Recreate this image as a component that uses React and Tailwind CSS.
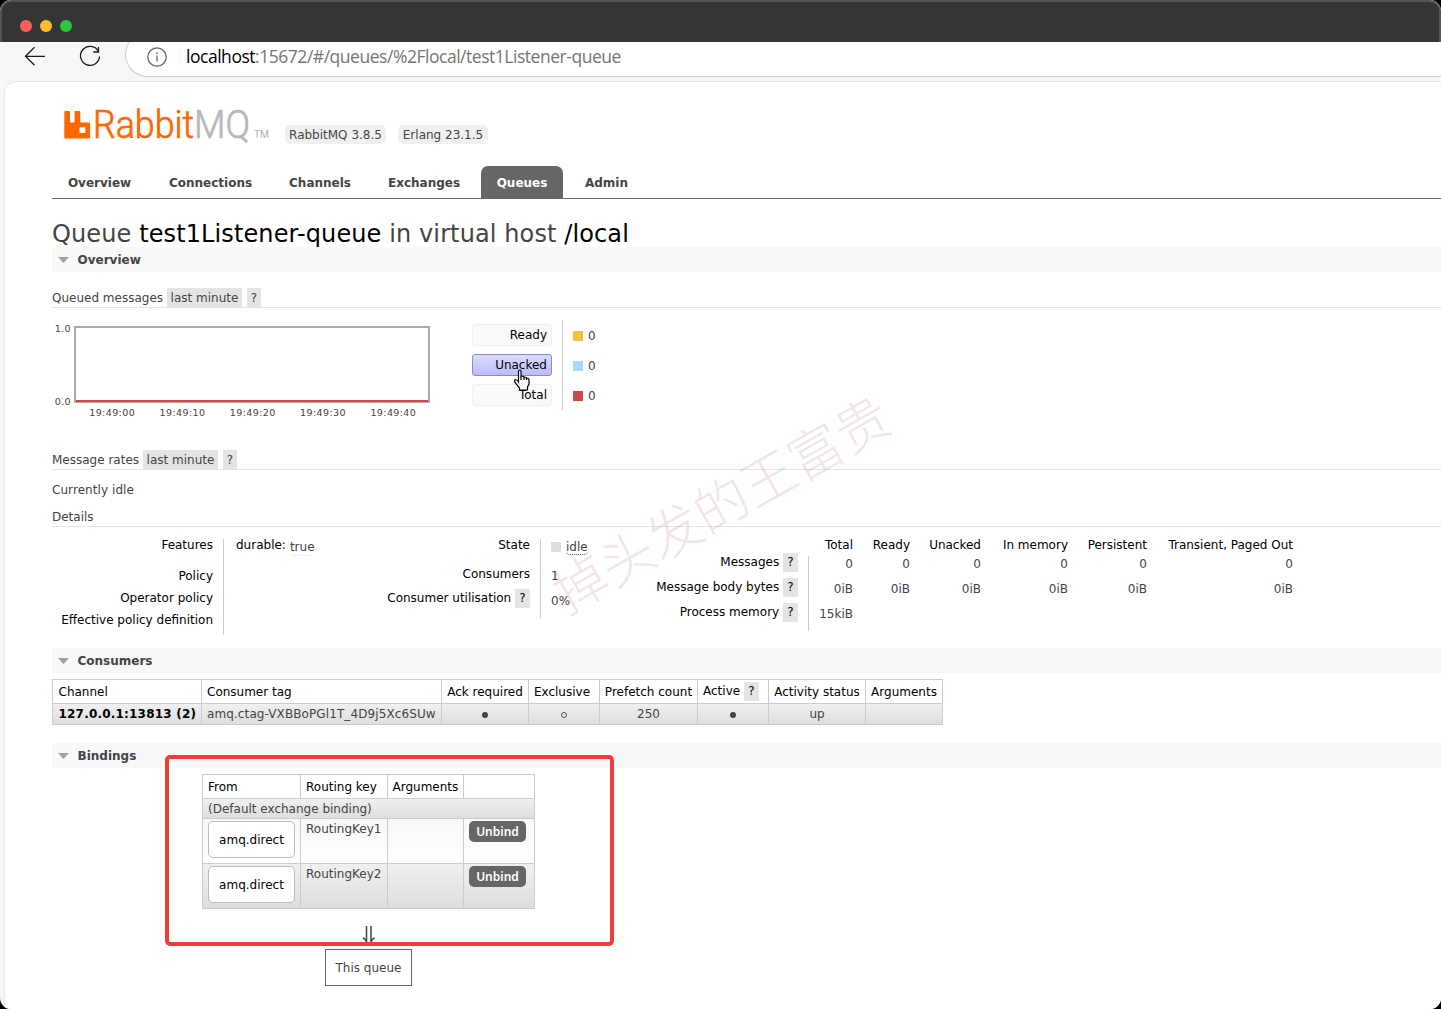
import React from 'react';

const tabs = [
  { name: 'Overview', cls: 'w-[96px] pr-px' },
  { name: 'Connections', cls: 'w-[115px]' },
  { name: 'Channels', cls: 'w-[94px]' },
  { name: 'Exchanges', cls: 'w-[104px]' },
  { name: 'Queues', cls: 'w-[82px]', active: true },
  { name: 'Admin', cls: 'w-[77px]' },
];

const legend = [
  { name: 'Ready', color: 'bg-[#edc240]', value: 0 },
  { name: 'Unacked', color: 'bg-[#afd8f8]', value: 0, hover: true },
  { name: 'Total', color: 'bg-[#cb4b4b]', value: 0 },
];

const times = ['19:49:00', '19:49:10', '19:49:20', '19:49:30', '19:49:40'];

const stats = [
  { name: 'Total', cls: 'w-[44px]', values: ['0', '0iB', '15kiB'] },
  { name: 'Ready', cls: 'w-[57px]', values: ['0', '0iB'] },
  { name: 'Unacked', cls: 'w-[71px]', values: ['0', '0iB'] },
  { name: 'In memory', cls: 'w-[87px]', values: ['0', '0iB'] },
  { name: 'Persistent', cls: 'w-[79px]', values: ['0', '0iB'] },
  { name: 'Transient, Paged Out', cls: 'w-[146px]', values: ['0', '0iB'] },
];

const bindings = [
  { from: 'amq.direct', key: 'RoutingKey1', row: 'bg-linear-to-b from-[#f8f8f8] to-white' },
  { from: 'amq.direct', key: 'RoutingKey2', row: 'bg-linear-to-b from-[#f0f0f0] to-[#dddddd]' },
];

function Help() {
  return <span className="inline-block h-[19px] w-[15px] bg-[#e4e4e4] text-center leading-[19px]">?</span>;
}

function Section({ title }) {
  return (
    <h2 className="flex h-[25px] items-center bg-[#f8f8f8] pl-[6px] font-bold">
      <svg width="11" height="6" viewBox="0 0 11 6" className="mr-[8.500px]">
        <path d="M0 0h11L5.5 6z" fill="#a0a0a0" />
      </svg>
      {title}
    </h2>
  );
}

function RateHeading({ title, width }) {
  return (
    <h3 className="flex h-5 border-b border-[#e4e4e4] leading-[20px]">
      <span className={width}>{title}</span>
      <span className="mr-[5px] w-[75px] bg-[#e4e4e4] text-center">last minute</span>
      <span className="w-[14px] bg-[#e4e4e4] text-center">?</span>
    </h3>
  );
}

function Toolbar() {
  return (
    <div className="flex h-[40px] overflow-hidden bg-[#f7f7f7]">
      <svg width="125" height="40" fill="none" stroke="#1b1b1b" strokeWidth="1.3">
        <path d="M45 14.300H25.500M34.500 5.300l-9 9 9 9" />
        <path d="M98.300 9.200A9.500 9.500 0 1 0 99.500 14.500M98.500 5v5h-5.200" />
      </svg>
      <div className="-mt-[10px] flex h-[45px] flex-1 items-center rounded-l-full border-b border-l border-[#cccccc] bg-white pt-[6px] pl-[21px]">
        <svg width="20" height="20" viewBox="0 0 20 20" fill="none" stroke="#666" strokeWidth="1.3">
          <circle cx="10" cy="10" r="9.200" />
          <path d="M10 8.500v6M10 5.300v1.600" />
        </svg>
        <span className="ml-[19px] font-['Open_Sans',sans-serif] text-[17.500px] tracking-[-0.47px] whitespace-nowrap text-[#757575]">
          <span className="text-black">localhost</span>:15672/#/queues/%2Flocal/test1Listener-queue
        </span>
      </div>
    </div>
  );
}

function Logo() {
  return (
    <svg width="208" height="50" viewBox="0 -9 208 50" className="-mt-[8px]">
      <path
        d="M2.500 1h3.300q1.200 0 1.200 1.200v9.300q0 .9.900.9h2.800q.9 0 .9-.9V2.200q0-1.200 1.200-1.200h3.300q1.200 0 1.200 1.200v9.300q0 .9.900.9h7.700q1.200 0 1.200 1.200v13.700q0 1.200-1.200 1.200H2.500q-1.200 0-1.200-1.200V2.200Q1.300 1 2.500 1zM17.200 17.300q-.7 0-.7.700v4.200q0 .7.700.7h4.400q.7 0 .7-.7V18q0-.7-.7-.7z"
        fill="#f60"
        fillRule="evenodd"
      />
      <text x="30" y="28" fontFamily="Roboto" fontSize="38" fill="#f60" stroke="#f60" strokeWidth="0.700" textLength="101" lengthAdjust="spacingAndGlyphs" className="font-light">Rabbit</text>
      <text x="131" y="28" fontFamily="Roboto" fontSize="38" fill="#b8b8b8" stroke="#b8b8b8" strokeWidth="0.700" textLength="56" lengthAdjust="spacingAndGlyphs" className="font-light">MQ</text>
      <text x="191" y="28" fontFamily="Roboto" fontSize="10" fill="#b0b0b0" textLength="15" lengthAdjust="spacingAndGlyphs">TM</text>
    </svg>
  );
}

function Details() {
  return (
    <div className="flex h-[121px] pt-[12px] text-black">
      <div className="h-24 w-[172px] border-r border-[#ccc] pr-[10px] text-right leading-[22px]">
        <div className="-mt-[5px] h-[31px]">Features</div>
        <div>Policy</div>
        <div>Operator policy</div>
        <div>Effective policy definition</div>
      </div>
      <div className="-mt-[1px] flex w-[141px] pl-[12px] leading-[14px]">
        durable:
        <span className="mt-[2px] ml-1 h-[16px] rounded border-b border-dotted border-[#ddd] text-[#444]">true</span>
      </div>
      <div className="h-[79px] w-[176px] border-r border-[#ccc] pr-[10px] text-right">
        <div className="-mt-[1px] h-[26px] leading-[14px]">State</div>
        <div className="h-[25px] leading-[20px]">Consumers</div>
        <div className="leading-[19px]">Consumer utilisation <Help /></div>
      </div>
      <div className="w-[96px] pl-[10px] text-[#444]">
        <div className="mt-px flex h-[26px] items-start leading-[14px]">
          <span className="mt-[2px] mr-[5px] size-[10px] bg-[#ddd]" />
          <span className="h-[15px] rounded border-b border-dotted border-[#444]">idle</span>
        </div>
        <div className="h-[27px] leading-[20px]">1</div>
        <div className="leading-[17px]">0%</div>
      </div>
      <div className="w-[171px] pt-[14px] pr-[10px] text-right leading-[19px]">
        <div className="h-[25px]">Messages <Help /></div>
        <div className="h-[25px]">Message body bytes <Help /></div>
        <div className="h-[25px]">Process memory <Help /></div>
      </div>
      <div className="mt-[17px] h-[75px] w-px bg-[#ccc]" />
      <div className="-mt-[1px] flex text-right">
        {stats.map((s) => (
          <div key={s.name} className={`${s.cls} leading-[14px] whitespace-nowrap`}>
            <div className="h-[15px]">{s.name}</div>
            {s.values.map((v, i) => (
              <div key={i} className="h-[25px] leading-[22px] text-[#444]">{v}</div>
            ))}
          </div>
        ))}
      </div>
    </div>
  );
}

const cell = 'border-r border-b border-[#ccc] p-0';

function Consumers() {
  return (
    <table className="mt-[6px] w-[891px] table-fixed border-separate border-spacing-0 border-t border-l border-[#ccc] text-center">
      <colgroup>
        <col className="w-[149px]" />
        <col className="w-[240px]" />
        <col className="w-[87px]" />
        <col className="w-[71px]" />
        <col className="w-[98px]" />
        <col className="w-[71px]" />
        <col className="w-[97px]" />
        <col className="w-[77px]" />
      </colgroup>
      <thead>
        <tr className="h-6 whitespace-nowrap text-black [&>th]:font-normal">
          <th className={`${cell} pl-[5.500px] text-left`}>Channel</th>
          <th className={`${cell} pl-[5px] text-left`}>Consumer tag</th>
          <th className={cell}>Ack required</th>
          <th className={`${cell} pr-1`}>Exclusive</th>
          <th className={cell}>Prefetch count</th>
          <th className={`${cell} pl-[5px] text-left`}>Active <Help /></th>
          <th className={cell}>Activity status</th>
          <th className={cell}>Arguments</th>
        </tr>
      </thead>
      <tbody>
        <tr className="h-[21px] bg-linear-to-b from-[#f0f0f0] to-[#dddddd] leading-[14px] whitespace-nowrap">
          <td className={`${cell} pl-[5.500px] text-left font-bold tracking-[0.2px] text-black`}>127.0.0.1:13813 (2)</td>
          <td className={`${cell} pl-[5px] text-left tracking-[0.1px]`}>amq.ctag-VXBBoPGl1T_4D9j5Xc6SUw</td>
          <td className={cell}><span className="mx-auto mt-px block size-[6px] rounded-full bg-[#444]" /></td>
          <td className={cell}><span className="mx-auto mt-[2px] block size-[6px] rounded-full border border-[#555]" /></td>
          <td className={cell}>250</td>
          <td className={cell}><span className="mx-auto mt-px block size-[6px] rounded-full bg-[#444]" /></td>
          <td className={cell}>up</td>
          <td className={cell} />
        </tr>
      </tbody>
    </table>
  );
}

function Bindings() {
  return (
    <div className="relative ml-[150px] w-[333px] pt-[6px]">
      <table className="w-[333px] table-fixed border-separate border-spacing-0 border-t border-l border-[#ccc] text-left">
        <colgroup>
          <col className="w-[98px]" />
          <col className="w-[87px]" />
          <col className="w-[76px]" />
          <col className="w-[71px]" />
        </colgroup>
        <thead>
          <tr className="h-6 whitespace-nowrap text-black [&>th]:font-normal">
            <th className={`${cell} pl-[5px]`}>From</th>
            <th className={`${cell} pl-[5px]`}>Routing key</th>
            <th className={`${cell} pl-[4.500px]`}>Arguments</th>
            <th className={cell} />
          </tr>
        </thead>
        <tbody>
          <tr className="h-5 bg-linear-to-b from-[#f0f0f0] to-[#dddddd] leading-[14px]">
            <td colSpan="4" className={`${cell} pl-[5px]`}>(Default exchange binding)</td>
          </tr>
          {bindings.map((b) => (
            <tr key={b.key} className={`h-[45px] ${b.row} align-top`}>
              <td className={`${cell} pt-[2px] pl-[5px]`}>
                <span className="block h-[37px] w-[87px] rounded-[5px] border border-[#bbb] bg-white text-center leading-[36px] text-black">{b.from}</span>
              </td>
              <td className={`${cell} pt-[2px] pl-[5px] leading-4`}>{b.key}</td>
              <td className={cell} />
              <td className={`${cell} pt-[2px] pl-[5px]`}>
                <button className="block h-[21px] w-[57px] rounded-[5px] bg-[#666] text-center font-['Noto_Sans',sans-serif] text-xs leading-[21px] font-semibold text-white">Unbind</button>
              </td>
            </tr>
          ))}
        </tbody>
      </table>
      <div className="mt-[13px] flex h-[27px] justify-center">
        <svg width="14" height="27" viewBox="0 0 14 27" fill="none" stroke="#444" strokeWidth="1.500">
          <path d="M4.500 4v16M9 4v16M.8 16q2.700.5 3.700 4M12.700 16q-2.700.5-3.700 4" />
        </svg>
      </div>
      <div className="mx-auto h-[37px] w-[87px] border border-[#666] text-center leading-[36px]">This queue</div>
      {/* highlight frame */}
      <div className="absolute -top-[13px] -left-[37px] h-[191px] w-[449px] rounded-[5px] border-[4.500px] border-[#f43b3b]" />
    </div>
  );
}

export default function App() {
  return (
    <div className="relative h-[1009px] w-[1441px] overflow-hidden bg-black font-['DejaVu_Sans',sans-serif] text-xs text-[#444]">
      <div className="flex h-full flex-col overflow-hidden rounded-[11px] bg-[#f7f7f7]">
        <div className="flex h-[42px] items-center gap-2 rounded-t-[11px] border-x-2 border-t-2 border-[#555] bg-[#353535] pt-[8px] pl-[18px]">
          <span className="size-3 rounded-full bg-[#ff5f57]" />
          <span className="size-3 rounded-full bg-[#febc2e]" />
          <span className="size-3 rounded-full bg-[#28c840]" />
        </div>
        <Toolbar />
        <main className="-mt-px ml-1 flex-1 rounded-tl-[12px] border-t border-l border-[#e8e8e8] bg-white pl-[47px]">
          <header className="flex h-[84px] items-start pt-[27px] pl-[11px]">
            <Logo />
            <span className="mt-[16px] ml-[14px] h-[19px] w-[101px] rounded-[5px] bg-[#f0f0f0] text-center leading-[20px]">RabbitMQ 3.8.5</span>
            <span className="mt-[16px] ml-3 h-[19px] w-[90px] rounded-[5px] bg-[#f0f0f0] text-center leading-[20px]">Erlang 23.1.5</span>
          </header>
          <nav className="flex h-[33px] gap-[5px] border-b border-[#666]">
            {tabs.map((t) => (
              <a key={t.name} className={`${t.cls} rounded-t-[7px] text-center leading-[34px] font-bold ${t.active ? 'bg-[#666] text-white' : ''}`}>
                {t.name}
              </a>
            ))}
          </nav>
          <h1 className="h-12 pt-[20px] text-2xl leading-[30px] tracking-[0.110px] whitespace-nowrap">
            Queue <b className="font-normal text-black">test1Listener-queue</b> in virtual host <b className="font-normal text-black">/local</b>
          </h1>
          <Section title="Overview" />
          <div className="h-4" />
          <RateHeading title="Queued messages" width="w-[115px]" />
          <div className="flex h-[142px] pt-3">
            <div className="w-[378px] pt-[6px] text-[9.500px] tracking-[0.4px]">
              <div className="flex h-[77px]">
                <div className="flex w-[22px] flex-col justify-between pr-[3px] text-right leading-[5px]">
                  <span>1.0</span>
                  <span className="-mb-px">0.0</span>
                </div>
                <div className="flex w-[356px] flex-col justify-end border-2 border-b border-[#aaa]">
                  <div className="h-[2px] bg-[#cb4b4b]" />
                </div>
              </div>
              <div className="mt-1 flex pl-[25px]">
                {times.map((t) => (
                  <span key={t} className="w-[70.300px] text-center">{t}</span>
                ))}
              </div>
            </div>
            <div className="ml-[42px] flex h-[90px] w-[91px] flex-col gap-2 border-r border-[#ccc] pt-1">
              {legend.map((l) => (
                <div
                  key={l.name}
                  className={`h-[22px] w-20 rounded-[3px] border pr-1 text-right leading-[20px] text-black ${l.hover ? 'border-[#8888dd] bg-linear-to-b from-[#ddddff] to-[#bbbbff]' : 'border-[#f0f0f0] bg-[#fafafa]'}`}
                >
                  {l.name}
                </div>
              ))}
            </div>
            <div className="flex flex-col gap-2 pt-[5px] pl-[10px]">
              {legend.map((l) => (
                <div key={l.name} className="flex h-[22px] items-center gap-[5px]">
                  <span className={`size-[10px] ${l.color}`} />
                  {l.value}
                </div>
              ))}
            </div>
          </div>
          <RateHeading title="Message rates" width="w-[91px]" />
          <p className="pt-[11px] leading-[18px] tracking-[0.07px]">Currently idle</p>
          <h3 className="mt-[9px] h-[19px] border-b border-[#e4e4e4] leading-[18px]">Details</h3>
          <Details />
          <Section title="Consumers" />
          <Consumers />
          <div className="h-[18px]" />
          <Section title="Bindings" />
          <Bindings />
        </main>
      </div>
      {/* mouse pointer */}
      <svg width="18" height="22" viewBox="0 0 18 22" className="absolute top-[369px] left-[513px]">
        <path d="M5.500 13V2.500Q5.500 1 6.800 1T8 2.500V7q3 0 3.200 1 2.300 0 2.500 1 2.300 0 2.300 2v4l-1.500 3v3H6.500v-2L2 13.500Q1 11 2.500 10.500 4 10.500 5.500 13z" fill="#fff" stroke="#000" strokeWidth="1.200" />
        <path d="M8 7v4M11 8v3M13.500 9v2" stroke="#000" strokeWidth="1.200" />
      </svg>
      {/* watermark */}
      <div className="pointer-events-none absolute top-[475px] left-[520px] w-[400px] -rotate-[29.500deg] text-center font-['Noto_Sans_CJK_SC',sans-serif] text-[54px] leading-[54px] font-light whitespace-nowrap text-[#b05050]/15">
        掉头发的王富贵
      </div>
    </div>
  );
}
